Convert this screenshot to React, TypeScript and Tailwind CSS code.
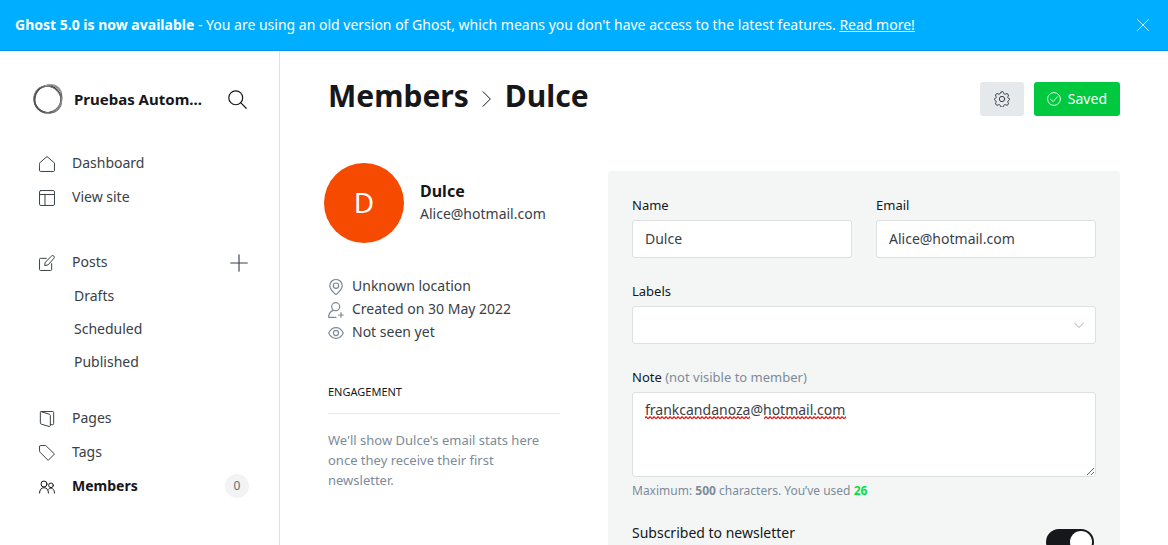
import { useState, type ReactNode, type SVGProps } from 'react';

function Icon({ children, ...props }: SVGProps<SVGSVGElement>) {
  return (
    <svg
      viewBox="0 0 24 24"
      fill="none"
      stroke="currentColor"
      strokeLinecap="round"
      strokeLinejoin="round"
      strokeWidth="1.5"
      aria-hidden="true"
      {...props}
    >
      {children}
    </svg>
  );
}

function Logo() {
  return (
    <svg viewBox="0 0 32 32" className="size-8 shrink-0" fill="none" aria-hidden="true">
      <circle cx="15.6" cy="16.4" r="13.4" stroke="#333" strokeWidth="1.5" />
      <ellipse cx="16.4" cy="15.8" rx="14.2" ry="13" transform="rotate(-50 16.4 15.8)" stroke="#555" strokeWidth="1" />
      <ellipse cx="15.8" cy="16.6" rx="14.4" ry="12.8" transform="rotate(40 15.8 16.6)" stroke="#777" strokeWidth="1" />
      <path d="M13 3c7-3 14-.5 16 6" stroke="#999" strokeWidth="1.600" />
      <path d="M29.500 14c1 6-3 12-9 14.500" stroke="#888" strokeWidth="1.600" />
      <path d="M3 13c-2 7 2 14 9 16" stroke="#555" strokeWidth="1.400" />
    </svg>
  );
}

const houseIcon = <path d="M.8 10.500 12 .8l11.200 9.700v11.200a1.500 1.500 0 0 1-1.500 1.500H2.300a1.500 1.500 0 0 1-1.500-1.500z" />;
const layoutIcon = (
  <>
    <rect x=".8" y=".8" width="22.400" height="22.400" rx="2" />
    <path d="M.8 6.800h22.400M9 6.800v16.400" />
  </>
);
const editIcon = (
  <>
    <path d="M11 5H2.300A1.500 1.500 0 0 0 .8 6.500v15.200a1.500 1.500 0 0 0 1.500 1.500h15.200a1.500 1.500 0 0 0 1.500-1.500V13" />
    <path d="m13 15-4.500.8L9.300 11 18.800 1.600a2.400 2.400 0 0 1 3.500 3.500z" />
  </>
);
const pagesIcon = (
  <path d="M17 20.500h3.500a1.500 1.500 0 0 0 1.500-1.500V2.300A1.500 1.500 0 0 0 20.500.8H3.500A1.500 1.500 0 0 0 2 2.300V18c0 .8.500 1.500 1.300 1.700l11.700 3.500c1 .3 2-.5 2-1.500V6.500c0-.7-.5-1.300-1.100-1.500L3 .9" />
);
const tagIcon = <path d="M.8 2.300v6.500a3 3 0 0 0 .9 2.100l12 12.200 9.500-9.500-12.200-12a3 3 0 0 0-2.100-.8H2.300A1.500 1.500 0 0 0 .8 2.300z" />;
const membersIcon = (
  <>
    <circle cx="7.500" cy="7.500" r="4.500" />
    <circle cx="18" cy="9.500" r="3.500" />
    <path d="M.8 21c0-4.500 2.500-8 6.700-8s6.700 3.500 6.700 8M14.500 15.200c4-3.500 8.700-.5 8.700 5.800" />
  </>
);

function NavItem({
  label,
  icon,
  active = false,
  children,
}: {
  label: string;
  icon: ReactNode;
  active?: boolean;
  children?: ReactNode;
}) {
  return (
    <li className="flex h-[34px] items-center justify-between">
      <a
        href="#"
        aria-current={active ? 'page' : undefined}
        className={active ? 'flex items-center gap-[17px] font-bold text-[#15171a]' : 'flex items-center gap-[17px] text-[#394047]'}
      >
        <Icon className="mt-[2px] size-4">{icon}</Icon>
        {label}
      </a>
      {children}
    </li>
  );
}

function Sidebar() {
  return (
    <nav className="flex w-70 shrink-0 flex-col border-r border-[#dfe1e3] pt-8 pr-[30px] pl-8 text-sm">
      <div className="flex h-8 items-center">
        <Logo />
        <div className="ml-[10px] text-[15px] leading-5 font-bold whitespace-nowrap text-[#15171a]">Pruebas Autom...</div>
        <button type="button" aria-label="Search" className="ml-auto text-[#15171a]">
          <Icon className="mr-[2px] size-[19px]">
            <circle cx="9.800" cy="9.800" r="8.800" />
            <path d="m16 16 7 7" />
          </Icon>
        </button>
      </div>
      <ul className="mt-[31px] pl-[7px]">
        <NavItem label="Dashboard" icon={houseIcon} />
        <NavItem label="View site" icon={layoutIcon} />
      </ul>
      <ul className="mt-[31px] pl-[7px]">
        <NavItem label="Posts" icon={editIcon}>
          <button type="button" aria-label="New post" className="text-[#394047]">
            <Icon className="mt-[2px] mr-px size-[18px]">
              <path d="M12 1v22M1 12h22" />
            </Icon>
          </button>
        </NavItem>
        {['Drafts', 'Scheduled', 'Published'].map((label) => (
          <li key={label} className="flex h-[33px] items-center pl-[35px] text-[#394047]">
            <a href="#">{label}</a>
          </li>
        ))}
      </ul>
      <ul className="mt-[23px] pl-[7px]">
        <NavItem label="Pages" icon={pagesIcon} />
        <NavItem label="Tags" icon={tagIcon} />
        <NavItem label="Members" icon={membersIcon} active>
          <span className="grid size-6 place-items-center rounded-full bg-[#f1f3f4] text-xs text-[#626d79]">0</span>
        </NavItem>
      </ul>
    </nav>
  );
}

function Banner() {
  return (
    <aside className="flex shrink-0 items-center justify-between border-b border-[#0a96e6] bg-[#00aeff] p-[15px] text-sm text-white">
      <p>
        <strong>Ghost 5.0 is now available</strong> - You are using an old version of Ghost, which means you don't have access to
        the latest features.{' '}
        <a href="#" className="underline">
          Read more!
        </a>
      </p>
      <button type="button" aria-label="Close">
        <Icon className="mr-1 size-3">
          <path d="m1 1 22 22M23 1 1 23" />
        </Icon>
      </button>
    </aside>
  );
}

function MemberSummary() {
  return (
    <section className="w-58 shrink-0">
      <div className="-mt-2 -ml-1 flex items-center gap-4">
        <div className="grid size-20 shrink-0 place-items-center rounded-full bg-[#f54a00] pb-[3px] text-[28px] text-white">D</div>
        <div className="pb-[3px]">
          <h3 className="text-base leading-6 font-bold">Dulce</h3>
          <p className="text-sm leading-[22px] text-[#394047]">Alice@hotmail.com</p>
        </div>
      </div>
      <ul className="mt-[31px] text-sm leading-[23px] text-[#394047]">
        <li className="flex items-center gap-2">
          <Icon className="mt-[2px] size-4 text-[#7c8b9a]" strokeWidth="1.800">
            <path d="M21.300 10c0 5-5.300 9.700-8.100 12.600a1.700 1.700 0 0 1-2.400 0C8 19.700 2.700 15 2.700 10a9.300 9.300 0 0 1 18.600 0z" />
            <circle cx="12" cy="10" r="4" />
          </Icon>
          Unknown location
        </li>
        <li className="flex items-center gap-2">
          <Icon className="mt-[2px] size-4 text-[#7c8b9a]" strokeWidth="1.800">
            <circle cx="11.500" cy="7" r="6" />
            <path d="M8 12.500C3.500 14 1 18 1 23h11M19.500 16v7M16 19.500h7" />
          </Icon>
          Created on 30 May 2022
        </li>
        <li className="flex items-center gap-2">
          <Icon className="mt-[2px] size-4 text-[#7c8b9a]" strokeWidth="1.800">
            <path d="M1 12C3.500 7 7.500 4 12 4s8.500 3 11 8c-2.500 5-6.500 8-11 8S3.500 17 1 12z" />
            <circle cx="12" cy="12" r="3.800" />
          </Icon>
          Not seen yet
        </li>
      </ul>
      <h4 className="mt-[41px] border-b border-[#e6e9eb] pb-[13px] text-[11px] leading-4 uppercase">Engagement</h4>
      <p className="mt-4 text-[13px] leading-[20px] text-[#7c8b9a]">
        We'll show Dulce's email stats here once they receive their first newsletter.
      </p>
    </section>
  );
}

const fieldClass = 'block w-full rounded-[3px] border border-[#dddfe0] bg-white px-3 text-sm text-[#394047] outline-none';
const inputClass = 'mt-[5px] h-[38px] pb-[2px]';
const labelClass = 'block text-[13px] leading-5';

function MemberForm() {
  const [name, setName] = useState('Dulce');
  const [email, setEmail] = useState('Alice@hotmail.com');
  const [note, setNote] = useState('frankcandanoza@hotmail.com');
  const [subscribed, setSubscribed] = useState(true);

  return (
    <form className="min-w-0 flex-1 rounded-[3px] bg-[#f4f6f6] px-6 pt-6 pb-8">
      <div className="grid grid-cols-2 gap-6">
        <div>
          <label htmlFor="name" className={labelClass}>Name</label>
          <input id="name" className={`${fieldClass} ${inputClass}`} value={name} onChange={(e) => setName(e.target.value)} />
        </div>
        <div>
          <label htmlFor="email" className={labelClass}>Email</label>
          <input id="email" type="email" className={`${fieldClass} ${inputClass}`} value={email} onChange={(e) => setEmail(e.target.value)} />
        </div>
      </div>
      <label htmlFor="labels" className={`${labelClass} mt-[23px]`}>Labels</label>
      <div className="relative mt-[5px]">
        <select id="labels" className={`${fieldClass} h-[38px] appearance-none`} defaultValue="">
          <option value="" />
        </select>
        <Icon className="pointer-events-none absolute top-[14px] right-3 size-[10px] text-[#9aa3ab]" strokeWidth="2.200">
          <path d="m1 7 11 11L23 7" />
        </Icon>
      </div>
      <label htmlFor="note" className={`${labelClass} mt-[23px]`}>
        Note <span className="text-[#7c8b9a]">(not visible to member)</span>
      </label>
      <div className="relative mt-[5px]">
        <textarea
          id="note"
          spellCheck={false}
          className={`${fieldClass} h-[85px] resize py-[7px] leading-5`}
          value={note}
          onChange={(e) => setNote(e.target.value)}
        />
        <svg className="pointer-events-none absolute top-[24px] left-[13px]" width="206" height="3" aria-hidden="true">
          <defs>
            <pattern id="squiggle" width="4" height="3" patternUnits="userSpaceOnUse">
              <path d="M-1 3 1 .7 3 2.700 5 .7M-3 .7-1 2.700" fill="none" stroke="#f00000" strokeWidth="1.100" />
            </pattern>
          </defs>
          <rect width="105" height="3" fill="url(#squiggle)" />
          <rect x="119" width="82" height="3" fill="url(#squiggle)" />
        </svg>
      </div>
      <p className="mt-1 text-xs leading-5 text-[#7c8b9a]">
        Maximum: <b>500</b> characters. You’ve used <b className="text-[#00e04b]">{note.length}</b>
      </p>
      <div className="mt-[22px] flex justify-between">
        <label htmlFor="subscribed" className="text-sm leading-5">Subscribed to newsletter</label>
        <input
          id="subscribed"
          type="checkbox"
          role="switch"
          checked={subscribed}
          onChange={(e) => setSubscribed(e.target.checked)}
          className="mt-[6px] mr-[2px] flex h-[26px] w-12 appearance-none items-center rounded-full bg-[#c5cbd0] p-[2px] before:size-[22px] before:rounded-full before:bg-white checked:justify-end checked:bg-[#15171a]"
        />
      </div>
    </form>
  );
}

export default function App() {
  return (
    <div className="flex h-screen flex-col overflow-hidden bg-white font-['Noto_Sans','Open_Sans',sans-serif] text-[#15171a]">
      <Banner />
      <div className="flex min-h-0 flex-1">
        <Sidebar />
        <main className="min-w-0 flex-1 overflow-y-auto px-12 [scrollbar-width:none]">
          <header className="flex items-center justify-between pt-6">
            <h2 className="flex items-center pb-[6px] text-[30px] leading-[42px] font-bold">
              <a href="#">Members</a>
              <Icon className="mx-[10px] mt-[6px] size-4">
                <path d="m6 1 11 11L6 23" />
              </Icon>
              Dulce
            </h2>
            <div className="flex gap-[10px] text-sm">
              <button type="button" aria-label="Member actions" className="grid h-[34px] w-11 place-items-center rounded-[3px] bg-[#e6e9eb] text-[#394047]">
                <Icon className="size-4">
                  <path d="M9.600 2.700a2.500 2.500 0 0 1 4.800 0l.3 1a1.800 1.800 0 0 0 2.400 1l1-.5a2.500 2.500 0 0 1 3.300 3.300l-.5 1a1.800 1.800 0 0 0 1 2.500l1 .3a2.500 2.500 0 0 1 0 2.400l-1 .6a1.800 1.800 0 0 0-1 2.500l.5 1a2.500 2.500 0 0 1-3.300 3.300l-1-.5a1.800 1.800 0 0 0-2.400 1l-.3 1a2.500 2.500 0 0 1-4.800 0l-.3-1a1.800 1.800 0 0 0-2.400-1l-1 .5a2.500 2.500 0 0 1-3.300-3.300l.5-1a1.800 1.800 0 0 0-1-2.500l-1-.6a2.500 2.500 0 0 1 0-2.400l1-.3a1.800 1.800 0 0 0 1-2.500l-.5-1a2.500 2.500 0 0 1 3.300-3.300l1 .5a1.800 1.800 0 0 0 2.400-1z" />
                  <circle cx="12" cy="12" r="4" />
                </Icon>
              </button>
              <button type="button" className="flex h-[34px] items-center gap-[7px] rounded-[3px] bg-[#00c940] px-[13px] text-white">
                <Icon className="size-[14px]">
                  <circle cx="12" cy="12" r="11" />
                  <path d="m6 12.500 4.500 4L18 8" />
                </Icon>
                Saved
              </button>
            </div>
          </header>
          <div className="flex items-start gap-12 pt-12">
            <MemberSummary />
            <MemberForm />
          </div>
        </main>
      </div>
    </div>
  );
}
